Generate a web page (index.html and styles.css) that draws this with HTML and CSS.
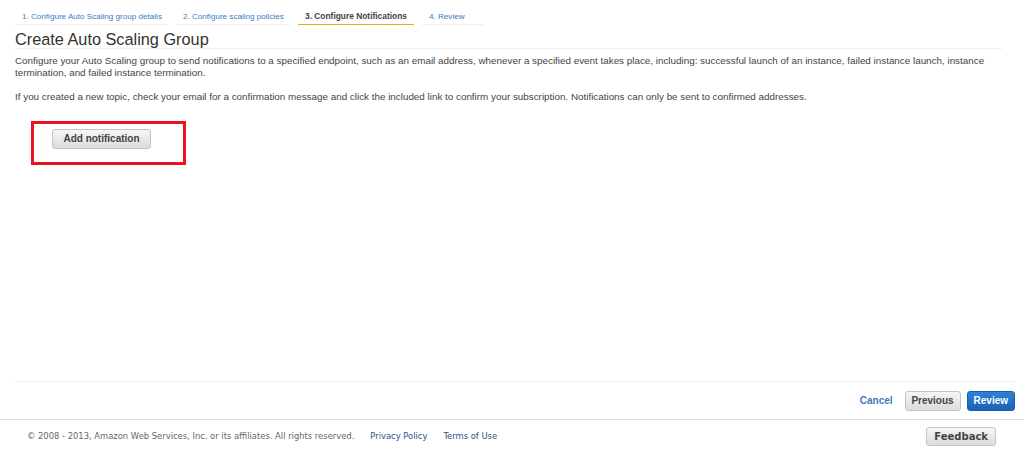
FILE: index.html
```html
<!DOCTYPE html>
<html lang="en">
<head>
    <meta charset="UTF-8">
    <title>Create Auto Scaling Group</title>
    <link rel="stylesheet" href="styles.css">
</head>
<body>
    <div class="page">
        <!-- wizard steps -->
        <ul class="steps">
            <li class="step">1. Configure Auto Scaling group details</li>
            <li class="step">2. Configure scaling policies</li>
            <li class="step active">3. Configure Notifications</li>
            <li class="step">4. Review</li>
        </ul>

        <h1 class="title">Create Auto Scaling Group</h1>

        <div class="content">
            <p class="intro">Configure your Auto Scaling group to send notifications to a specified endpoint, such as an email address, whenever a specified event takes place, including: successful launch of an instance, failed instance launch, instance termination, and failed instance termination.</p>
            <p class="intro">If you created a new topic, check your email for a confirmation message and click the included link to confirm your subscription. Notifications can only be sent to confirmed addresses.</p>

            <div class="highlight">
                <button class="btn btn-add">Add notification</button>
            </div>
        </div>

        <div class="actions">
            <a href="#" class="cancel">Cancel</a>
            <button class="btn btn-prev">Previous</button>
            <button class="btn btn-primary">Review</button>
        </div>
    </div>

    <footer class="footer">
        <span class="copy">&copy; 2008 - 2013, Amazon Web Services, Inc. or its affiliates. All rights reserved.</span>
        <a href="#" class="footer-link">Privacy Policy</a>
        <a href="#" class="footer-link">Terms of Use</a>
        <button class="btn btn-feedback">Feedback</button>
    </footer>
</body>
</html>
```

FILE: styles.css
```css
* {
    margin: 0;
    padding: 0;
    box-sizing: border-box;
}

html, body {
    height: 100%;
}

body {
    background: #fff;
    font-family: Arial, 'Liberation Sans', sans-serif;
    color: #444;
    display: flex;
    flex-direction: column;
}

.page {
    flex: 1;
    display: flex;
    flex-direction: column;
    padding: 0 9px 0 15px;
}

/* wizard steps */
.steps {
    list-style: none;
    display: flex;
    gap: 8px;
    margin-top: 9px;
}

.step {
    font-size: 8.1px;
    line-height: 13px;
    color: #3b7bbf;
    white-space: nowrap;
    padding: 1px 7px 1px;
    border-bottom: 1px solid #eee;
}

.step:nth-child(1) { width: 153px; }
.step:nth-child(2) { width: 114px; }
.step:nth-child(3) { width: 116px; }
.step:nth-child(4) { width: 61px; }

.step.active {
    color: #444;
    font-weight: bold;
    font-size: 8.4px;
    border-bottom: 1px solid #f5a623;
}

.title {
    font-size: 16.3px;
    font-weight: normal;
    color: #333;
    line-height: 18px;
    margin-top: 5px;
    margin-right: 13px;
    border-bottom: 1px solid #eee;
}

.content {
    flex: 1;
    border-bottom: 1px solid #eee;
}

.intro {
    font-size: 9.85px;
    line-height: 12px;
    margin-top: 6px;
    margin-bottom: 12px;
}

.highlight {
    width: 155px;
    height: 44px;
    margin: 18px 0 0 16px;
    border: 3px solid #e8141f;
    padding: 4px 0 0 18px;
}

/* buttons */
.btn {
    font-family: Arial, 'Liberation Sans', sans-serif;
    font-size: 10px;
    font-weight: bold;
    color: #444;
    height: 20px;
    padding: 0 5px;
    border: 1px solid #c3c3c3;
    border-radius: 3px;
    background: linear-gradient(#f6f6f6, #dcdcdc);
    cursor: pointer;
}

.btn-add {
    width: 99px;
}

.btn-prev {
    width: 56px;
}

.btn-primary {
    color: #fff;
    border-color: #1b5fa8;
    background: linear-gradient(#2d82d6, #1a63b6);
    padding: 0 6px;
}

.actions {
    display: flex;
    align-items: center;
    justify-content: flex-end;
    gap: 6px;
    height: 37px;
}

.cancel {
    font-size: 10px;
    font-weight: bold;
    color: #3b7bbf;
    text-decoration: none;
    margin-right: 6px;
}

/* footer */
.footer {
    display: flex;
    align-items: center;
    height: 33px;
    border-top: 1px solid #ddd;
    padding: 0 28px 0 27px;
    font-family: 'DejaVu Sans', Verdana, sans-serif;
    font-size: 8.4px;
}

.copy {
    color: #666;
    margin-right: 16px;
}

.footer-link {
    color: #2a4f8a;
    text-decoration: none;
    margin-right: 16px;
}

.btn-feedback {
    margin-left: auto;
    height: 19px;
    padding: 0 7px;
    font-family: 'DejaVu Sans', Verdana, sans-serif;
    font-size: 10px;
}
```
